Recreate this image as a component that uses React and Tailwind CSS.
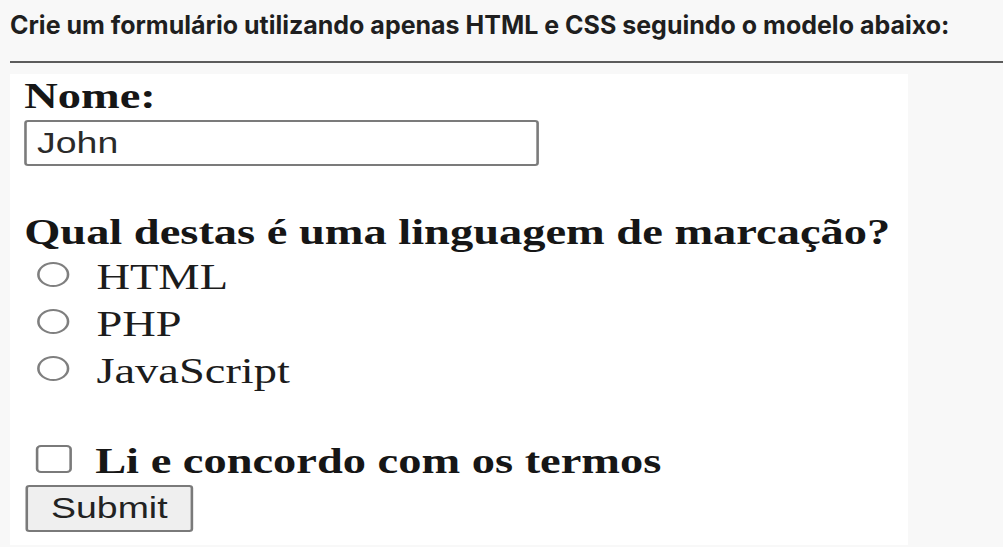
export default function App() {
  const options = ["HTML", "PHP", "JavaScript"];
  return (
    <div className="w-[1003px] h-[547px] bg-[#f8f8f8] overflow-hidden">
      <div className="pl-[10px] pt-[13px] text-[25px] leading-[25px] font-bold text-[#1f1f1f] font-['Inter',sans-serif] whitespace-nowrap">
        Crie um formulário utilizando apenas HTML e CSS seguindo o modelo abaixo:
      </div>
      <div className="ml-[10px] mt-[23px] h-[2px] bg-[#5c5c5c]" />
      <div className="ml-[10px] mt-[11px] w-[898px] h-[471px] bg-white overflow-hidden">
        <form
          className="origin-top-left scale-x-[1.29] pl-[11px] pt-[4px] font-['Liberation_Serif',serif] text-[36px] text-[#161616]"
          onSubmit={(e) => e.preventDefault()}
        >
          <label className="block font-bold leading-[36px]">Nome:</label>
          <input
            type="text"
            defaultValue="John"
            readOnly
            className="block mt-[6px] w-[399px] h-[46px] border-2 border-[#7b7b7b] rounded-[3px] px-[8px] bg-white font-['Liberation_Sans',sans-serif] text-[29px] text-[#2a2a2a] outline-none"
          />
          <div className="mt-[48px] font-bold leading-[36px] whitespace-nowrap">
            Qual destas é uma linguagem de marcação?
          </div>
          <div className="mt-[4px] flex flex-col">
            {options.map((o) => (
              <label key={o} className="flex items-start h-[47px]">
                <input
                  type="radio"
                  name="lang"
                  className="appearance-none ml-[10px] mt-[8px] w-[25px] h-[25px] rounded-full border-2 border-[#7f7f7f] bg-white"
                />
                <span className="ml-[21px] leading-[47px] text-[#1c1c1c]">{o}</span>
              </label>
            ))}
          </div>
          <label className="mt-[48px] flex items-start h-[36px]">
            <input
              type="checkbox"
              className="appearance-none ml-[9px] mt-[2px] w-[28px] h-[28px] rounded-[4px] border-2 border-[#7a7a7a] bg-white"
            />
            <span className="ml-[18px] font-bold leading-[36px] whitespace-nowrap">
              Li e concordo com os termos
            </span>
          </label>
          <button
            type="submit"
            className="block ml-[1px] mt-[6px] w-[130px] h-[47px] border-2 border-[#7a7a7a] rounded-[3px] bg-[#efefef] font-['Liberation_Sans',sans-serif] text-[29px] leading-none text-[#222]"
          >
            Submit
          </button>
        </form>
      </div>
    </div>
  );
}
